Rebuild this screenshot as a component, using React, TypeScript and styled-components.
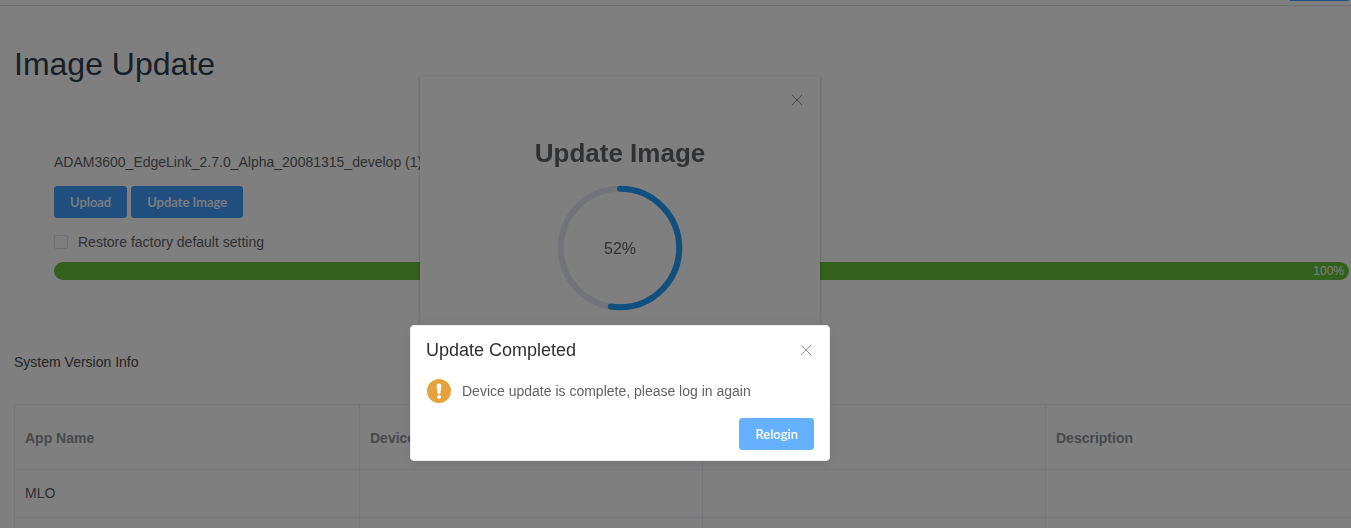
import React from "react";
import styled, { createGlobalStyle } from "styled-components";

const GlobalStyle = createGlobalStyle`
  *, *::before, *::after { box-sizing: border-box; }
  body {
    margin: 0;
    background: #fff;
    color: #606266;
    font: 14px/20px "Liberation Sans", Arial, sans-serif;
  }
`;

const Shell = styled.div`
  height: 100vh;
  overflow: hidden;
`;

const TopBar = styled.header`
  display: flex;
  justify-content: flex-end;
  height: 6px;
  padding-right: 2px;
  border-bottom: 1px solid #dcdfe6;
`;

const NavMarker = styled.span`
  width: 59px;
  height: 1px;
  background: #409eff;
`;

const Page = styled.main`
  padding: 38px 0 0 14px;
`;

const PageTitle = styled.h1`
  margin: 0 0 68px;
  font-size: 32px;
  line-height: 40px;
  font-weight: 400;
  color: #2c3e50;
`;

const UpdateForm = styled.section`
  display: flex;
  flex-direction: column;
  align-items: flex-start;
  padding: 0 2px 0 40px;
`;

const FileName = styled.p`
  margin: 0 0 14px;
`;

const ButtonRow = styled.div`
  display: flex;
  gap: 4px;
  margin-bottom: 14px;
`;

const Button = styled.button<{ $active?: boolean }>`
  height: 32px;
  padding: 0 15px;
  border: 1px solid ${(p) => (p.$active ? "#66b1ff" : "#409eff")};
  border-radius: 3px;
  background: ${(p) => (p.$active ? "#66b1ff" : "#409eff")};
  color: #fff;
  font: 600 13px/16px Lato, "Liberation Sans", sans-serif;
  cursor: pointer;
`;

const CheckLabel = styled.label`
  display: flex;
  align-items: center;
  gap: 10px;
  margin-bottom: 10px;
`;

const Checkbox = styled.input`
  appearance: none;
  width: 14px;
  height: 14px;
  margin: 0;
  border: 1px solid #dcdfe6;
  border-radius: 2px;
  background: #fff;
`;

const ProgressTrack = styled.div`
  width: 100%;
  height: 18px;
  border-radius: 9px;
  background: #ebeef5;
`;

const ProgressFill = styled.div`
  height: 100%;
  padding-right: 5px;
  border-radius: 9px;
  background: #67c23a;
  color: #fff;
  font-size: 12px;
  line-height: 18px;
  text-align: right;
`;

const SectionTitle = styled.h2`
  margin: 72px 0 32px;
  font-size: 14px;
  line-height: 20px;
  font-weight: 400;
  color: #48494d;
`;

const VersionTable = styled.table`
  width: calc(100% + 38px);
  table-layout: fixed;
  border-collapse: separate;
  border-spacing: 0;
  border: solid #ebeef5;
  border-width: 1px 0 0 1px;
`;

const HeadCell = styled.th`
  height: 65px;
  padding: 12px 10px 10px;
  border: solid #ebeef5;
  border-width: 0 1px 1px 0;
  color: #909399;
  text-align: left;

  &:first-child { width: 345px; }
`;

const Cell = styled.td`
  height: 48px;
  padding: 10px 10px 12px;
  border: solid #ebeef5;
  border-width: 0 1px 1px 0;
`;

const Layer = styled.div<{ $top: number; $dim?: boolean }>`
  position: fixed;
  inset: 0;
  display: flex;
  justify-content: center;
  align-items: flex-start;
  padding: ${(p) => p.$top}px 111px 0 0;
  background: ${(p) => (p.$dim ? "rgba(0, 0, 0, 0.5)" : "transparent")};
`;

const ProgressDialog = styled.section`
  width: 400px;
  padding: 14px 13px 40px;
  border-radius: 2px;
  background: #fff;
  box-shadow: 0 1px 3px rgba(0, 0, 0, 0.3);
  text-align: center;
`;

const DialogTop = styled.div`
  display: flex;
  justify-content: flex-end;
`;

const IconButton = styled.button`
  display: flex;
  align-items: center;
  justify-content: center;
  width: 20px;
  height: 20px;
  padding: 0;
  border: 0;
  background: none;
  color: #909399;
  cursor: pointer;
`;

const DialogTitle = styled.h2`
  margin: 28px 0 17px;
  font-size: 26px;
  line-height: 30px;
`;

const Ring = styled.div`
  display: grid;
  place-items: center;
  font-size: 16px;

  > * { grid-area: 1 / 1; }
  > span { padding-top: 2px; }
`;

const MessageBox = styled.section`
  width: 420px;
  padding: 15px 15px 10px;
  border: 1px solid #ebeef5;
  border-radius: 4px;
  background: #fff;
  box-shadow: 0 2px 12px rgba(0, 0, 0, 0.1);
`;

const MessageHeader = styled.header`
  display: flex;
  align-items: center;
  justify-content: space-between;
  height: 18px;

  ${IconButton} { margin-right: -2px; }
`;

const MessageTitle = styled.h2`
  margin: 0;
  font-size: 18px;
  line-height: 18px;
  font-weight: 400;
  color: #303133;
`;

const MessageBody = styled.div`
  display: flex;
  align-items: center;
  gap: 10px;
  margin: 20px 0 15px;

  p { margin: 0; }
`;

const MessageFooter = styled.footer`
  display: flex;
  justify-content: flex-end;
`;

const CloseIcon = () => (
  <svg width="12" height="12" viewBox="0 0 12 12" fill="none" stroke="currentColor" aria-hidden="true">
    <path d="M1 1l10 10M11 1L1 11" />
  </svg>
);

const WarningIcon = () => (
  <svg width="26" height="24" viewBox="0 0 26 24" aria-hidden="true">
    <circle cx="13" cy="12" r="12" fill="#e6a23c" />
    <path d="M10.6 6.9a2.4 2.3 0 0 1 4.8 0l-1 7.2a1.4 1.2 0 0 1-2.8 0z" fill="#fff" />
    <circle cx="13" cy="18" r="2" fill="#fff" />
  </svg>
);

const ProgressRing = ({ value }: { value: number }) => (
  <Ring role="progressbar" aria-label="Update Image" aria-valuenow={Math.floor(value)}>
    <svg width="126" height="126" viewBox="0 0 100 100" fill="none" strokeWidth="4.8">
      <circle cx="50" cy="50" r="47" stroke="#e5e9f2" />
      <circle
        cx="50"
        cy="50"
        r="47"
        stroke="#20a0ff"
        strokeLinecap="round"
        pathLength="100"
        strokeDasharray={`${value} 100`}
        transform="rotate(-90 50 50)"
      />
    </svg>
    <span>{Math.floor(value)}%</span>
  </Ring>
);

const columns = ["App Name", "Device Version", "", "Description"];
const rows = ["MLO", ""];

export default function App() {
  return (
    <Shell>
      <GlobalStyle />
      <TopBar>
        <NavMarker />
      </TopBar>
      <Page>
        <PageTitle>Image Update</PageTitle>
        <UpdateForm>
          <FileName>ADAM3600_EdgeLink_2.7.0_Alpha_20081315_develop (1)</FileName>
          <ButtonRow>
            <Button type="button">Upload</Button>
            <Button type="button">Update Image</Button>
          </ButtonRow>
          <CheckLabel>
            <Checkbox type="checkbox" />
            Restore factory default setting
          </CheckLabel>
          <ProgressTrack role="progressbar" aria-label="Upload" aria-valuenow={100}>
            <ProgressFill style={{ width: "100%" }}>100%</ProgressFill>
          </ProgressTrack>
        </UpdateForm>
        <SectionTitle>System Version Info</SectionTitle>
        <VersionTable>
          <thead>
            <tr>
              {columns.map((name, i) => (
                <HeadCell key={i} scope="col">{name}</HeadCell>
              ))}
            </tr>
          </thead>
          <tbody>
            {rows.map((name, i) => (
              <tr key={i}>
                <Cell>{name}</Cell>
                <Cell />
                <Cell />
                <Cell />
              </tr>
            ))}
          </tbody>
        </VersionTable>
      </Page>

      <Layer $top={76}>
        <ProgressDialog role="dialog" aria-labelledby="progress-title">
          <DialogTop>
            <IconButton type="button" aria-label="Close">
              <CloseIcon />
            </IconButton>
          </DialogTop>
          <DialogTitle id="progress-title">Update Image</DialogTitle>
          <ProgressRing value={52.5} />
        </ProgressDialog>
      </Layer>

      <Layer $top={325} $dim>
        <MessageBox role="alertdialog" aria-modal="true" aria-labelledby="message-title">
          <MessageHeader>
            <MessageTitle id="message-title">Update Completed</MessageTitle>
            <IconButton type="button" aria-label="Close">
              <CloseIcon />
            </IconButton>
          </MessageHeader>
          <MessageBody>
            <WarningIcon />
            <p>Device update is complete, please log in again</p>
          </MessageBody>
          <MessageFooter>
            <Button type="button" $active>Relogin</Button>
          </MessageFooter>
        </MessageBox>
      </Layer>
    </Shell>
  );
}
